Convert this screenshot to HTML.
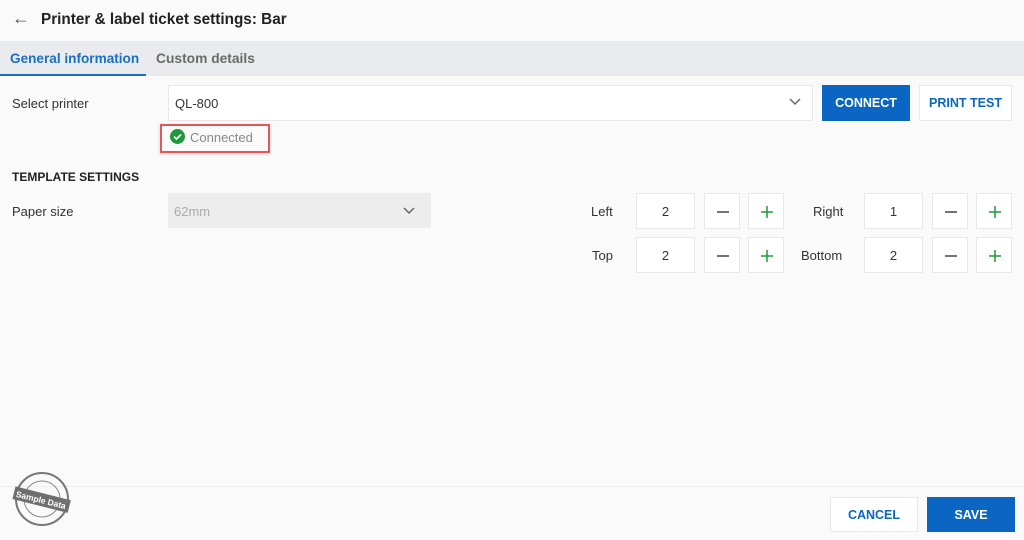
<!DOCTYPE html>
<html><head><style>
*{box-sizing:border-box;margin:0;padding:0}
body{width:1024px;height:540px;background:#fafafa;font-family:"Liberation Sans",sans-serif;color:#333;position:relative;overflow:hidden;font-size:13px}
.abs{position:absolute}
.box{position:absolute;border:1px solid #e8e8e8;background:#fff;text-align:center;font-size:13px;color:#333}
.btn{position:absolute;display:flex;align-items:center;justify-content:center;font-weight:bold;font-size:12.5px}
.ic{position:absolute;border:1px solid #e8e8e8;background:#fff;width:36px;height:36px}
.ic svg{position:absolute;left:11px;top:11px}
</style></head><body>
<div class="abs" style="left:12px;top:8px;font-size:18px;color:#555">&#8592;</div>
<div class="abs" style="left:41px;top:11px;font-size:15.3px;font-weight:bold;color:#222">Printer &amp; label ticket settings: Bar</div>
<div class="abs" style="left:0;top:41px;width:1024px;height:35px;background:#eaebee"></div>
<div class="abs" style="left:10px;top:51px;font-size:13.6px;font-weight:bold;color:#1a6fc4">General information</div>
<div class="abs" style="left:0;top:74px;width:146px;height:2px;background:#1a6fc4"></div>
<div class="abs" style="left:156px;top:51px;font-size:13.8px;font-weight:bold;color:#6b6b6b">Custom details</div>
<div class="abs" style="left:12px;top:96px;font-size:13px">Select printer</div>
<div class="box" style="left:168px;top:85px;width:645px;height:36px;text-align:left;padding:10px 6px">QL-800</div>
<svg class="abs" style="left:789px;top:97px" width="12" height="10"><path d="M1 2l5 5 5-5" stroke="#666" stroke-width="1.5" fill="none"/></svg>
<div class="btn" style="left:822px;top:85px;width:88px;height:36px;background:#0a66c2;color:#fff">CONNECT</div>
<div class="btn" style="left:919px;top:85px;width:93px;height:36px;background:#fff;border:1px solid #e8e8e8;color:#0a66c2">PRINT TEST</div>
<div class="abs" style="left:160px;top:124px;width:110px;height:29px;border:2px solid #e0585a;box-shadow:0 1px 3px rgba(0,0,0,.2)"></div>
<svg class="abs" style="left:170px;top:129px" width="15" height="15"><circle cx="7.5" cy="7.5" r="7.5" fill="#1e9a3a"/><path d="M4 7.6l2.5 2.4 4.5-4.5" stroke="#fff" stroke-width="1.8" fill="none"/></svg>
<div class="abs" style="left:190px;top:130px;color:#888">Connected</div>
<div class="abs" style="left:12px;top:170px;font-weight:bold;font-size:12px;color:#222">TEMPLATE SETTINGS</div>
<div class="abs" style="left:12px;top:204px">Paper size</div>
<div class="abs" style="left:168px;top:193px;width:263px;height:35px;background:#ededed;color:#aaa;padding:11px 6px">62mm</div>
<svg class="abs" style="left:403px;top:206px" width="12" height="10"><path d="M1 2l5 5 5-5" stroke="#666" stroke-width="1.5" fill="none"/></svg>

<div class="abs" style="left:591px;top:204px">Left</div>
<div class="abs" style="left:592px;top:248px">Top</div>
<div class="abs" style="left:813px;top:204px">Right</div>
<div class="abs" style="left:801px;top:248px">Bottom</div>

<div class="box" style="left:636px;top:193px;width:59px;height:36px;padding-top:10px">2</div>
<div class="ic" style="left:704px;top:193px"><svg width="14" height="14"><path d="M1 7h12" stroke="#444" stroke-width="1.5"/></svg></div>
<div class="ic" style="left:748px;top:193px"><svg width="14" height="14"><path d="M1 7h12M7 1v12" stroke="#1e9a3a" stroke-width="1.5"/></svg></div>
<div class="box" style="left:864px;top:193px;width:59px;height:36px;padding-top:10px">1</div>
<div class="ic" style="left:932px;top:193px"><svg width="14" height="14"><path d="M1 7h12" stroke="#444" stroke-width="1.5"/></svg></div>
<div class="ic" style="left:976px;top:193px"><svg width="14" height="14"><path d="M1 7h12M7 1v12" stroke="#1e9a3a" stroke-width="1.5"/></svg></div>

<div class="box" style="left:636px;top:237px;width:59px;height:36px;padding-top:10px">2</div>
<div class="ic" style="left:704px;top:237px"><svg width="14" height="14"><path d="M1 7h12" stroke="#444" stroke-width="1.5"/></svg></div>
<div class="ic" style="left:748px;top:237px"><svg width="14" height="14"><path d="M1 7h12M7 1v12" stroke="#1e9a3a" stroke-width="1.5"/></svg></div>
<div class="box" style="left:864px;top:237px;width:59px;height:36px;padding-top:10px">2</div>
<div class="ic" style="left:932px;top:237px"><svg width="14" height="14"><path d="M1 7h12" stroke="#444" stroke-width="1.5"/></svg></div>
<div class="ic" style="left:976px;top:237px"><svg width="14" height="14"><path d="M1 7h12M7 1v12" stroke="#1e9a3a" stroke-width="1.5"/></svg></div>

<div class="abs" style="left:0;top:486px;width:1024px;height:1px;background:#eee"></div>
<div class="btn" style="left:830px;top:497px;width:88px;height:35px;background:#fff;border:1px solid #e8e8e8;color:#0a66c2">CANCEL</div>
<div class="btn" style="left:927px;top:497px;width:88px;height:35px;background:#0a66c2;color:#fff">SAVE</div>

<svg class="abs" style="left:10px;top:470px" width="62" height="60">
<circle cx="32" cy="29" r="26" fill="none" stroke="#777" stroke-width="2"/>
<circle cx="32" cy="29" r="18" fill="none" stroke="#888" stroke-width="1"/>
<g transform="rotate(14 31 30)"><rect x="3" y="23" width="57" height="13" fill="#6f6f6f"/>
<text x="31" y="33" text-anchor="middle" font-family="Liberation Sans" font-size="8.5" font-weight="bold" fill="#fff">Sample Data</text></g>
</svg>
</body></html>
